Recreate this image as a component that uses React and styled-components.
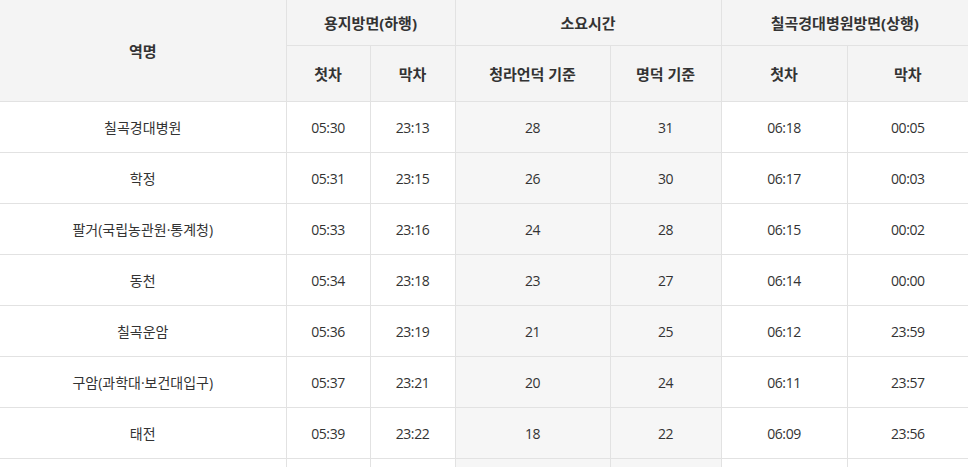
import styled, { createGlobalStyle } from 'styled-components';

const GlobalStyle = createGlobalStyle`
  html, body {
    margin: 0;
    padding: 0;
    background: #ffffff;
  }
  body {
    font-family: "Open Sans", "Noto Sans CJK KR", sans-serif;
    color: #333333;
  }
`;

const Table = styled.table`
  width: 968px;
  table-layout: fixed;
  border-collapse: collapse;
  border-spacing: 0;
`;

const HeadCell = styled.th`
  background: #f4f4f4;
  font-size: 15px;
  font-weight: 700;
  color: #333333;
  text-align: center;
  vertical-align: middle;
  padding: 0;
  height: ${(p) => p.$h || 46}px;
  border-right: 1px solid #e2e2e2;
  border-bottom: 1px solid #e2e2e2;
  &:last-child {
    border-right: none;
  }
`;

const Cell = styled.td`
  background: ${(p) => (p.$shade ? '#f6f6f6' : '#ffffff')};
  font-size: 14px;
  font-weight: 400;
  color: #333333;
  text-align: center;
  vertical-align: middle;
  padding: 0;
  height: 50px;
  letter-spacing: ${(p) => (p.$num ? '-0.4px' : '0')};
  border-right: 1px solid #e2e2e2;
  border-bottom: 1px solid #e2e2e2;
  &:last-child {
    border-right: none;
  }
`;

const rows = [
  ['칠곡경대병원', '05:30', '23:13', '28', '31', '06:18', '00:05'],
  ['학정', '05:31', '23:15', '26', '30', '06:17', '00:03'],
  ['팔거(국립농관원·통계청)', '05:33', '23:16', '24', '28', '06:15', '00:02'],
  ['동천', '05:34', '23:18', '23', '27', '06:14', '00:00'],
  ['칠곡운암', '05:36', '23:19', '21', '25', '06:12', '23:59'],
  ['구암(과학대·보건대입구)', '05:37', '23:21', '20', '24', '06:11', '23:57'],
  ['태전', '05:39', '23:22', '18', '22', '06:09', '23:56'],
  ['매천', '05:41', '23:24', '17', '20', '06:08', '23:54'],
];

const widths = [286, 84, 85, 155, 111, 126, 121];

export default function App() {
  return (
    <>
      <GlobalStyle />
      <Table>
        <colgroup>
          {widths.map((w, i) => (
            <col key={i} style={{ width: w }} />
          ))}
        </colgroup>
        <thead>
          <tr>
            <HeadCell rowSpan={2}>역명</HeadCell>
            <HeadCell colSpan={2} $h={45}>용지방면(하행)</HeadCell>
            <HeadCell colSpan={2} $h={45}>소요시간</HeadCell>
            <HeadCell colSpan={2} $h={45}>칠곡경대병원방면(상행)</HeadCell>
          </tr>
          <tr>
            <HeadCell $h={55}>첫차</HeadCell>
            <HeadCell $h={55}>막차</HeadCell>
            <HeadCell $h={55}>청라언덕 기준</HeadCell>
            <HeadCell $h={55}>명덕 기준</HeadCell>
            <HeadCell $h={55}>첫차</HeadCell>
            <HeadCell $h={55}>막차</HeadCell>
          </tr>
        </thead>
        <tbody>
          {rows.map((r) => (
            <tr key={r[0]}>
              {r.map((v, i) => (
                <Cell key={i} $num={i > 0} $shade={i === 3 || i === 4}>
                  {v}
                </Cell>
              ))}
            </tr>
          ))}
        </tbody>
      </Table>
    </>
  );
}
